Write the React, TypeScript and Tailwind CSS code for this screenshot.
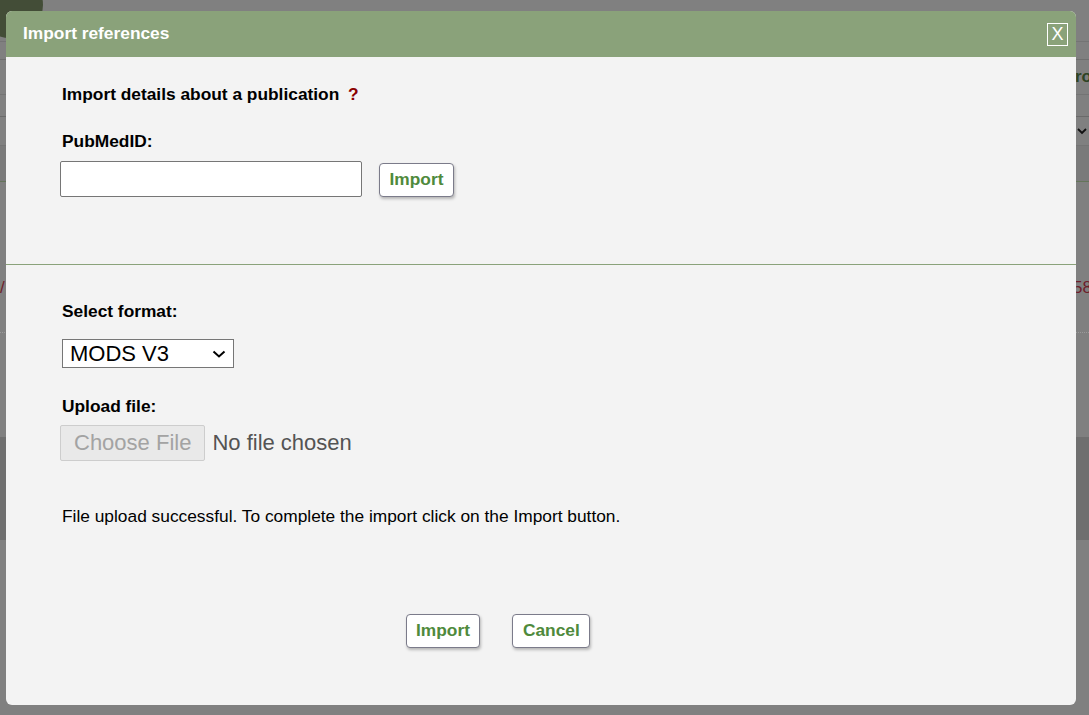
import React from "react";

const font = { fontFamily: '"Liberation Sans", Arial, sans-serif' };

const GreenButton = ({ label }: { label: string }) => (
  <button
    type="button"
    className="h-[34px] px-[9.5px] bg-white border border-[#7b7b8a] rounded-[4px] shadow-[1px_2px_3px_rgba(0,0,0,0.25)] text-[17.33px] font-bold text-[#4f8a3c] leading-none"
  >
    {label}
  </button>
);

const Background = () => (
  <div className="flex flex-col w-full text-[14px]">
    <div className="h-[42px] flex items-start border-b border-[#747474]">
      <div className="w-[66px] h-[66px] rounded-full bg-[#434d37] -ml-[23px] -mt-[28px] shrink-0" />
      <div className="ml-[510px] mt-[7px] text-[#2b3552] whitespace-nowrap">
        Logged in as: David Donald Murphy (staff) · Logout
      </div>
    </div>
    <div className="h-[18px] border-b border-[#6f6f6f]" />
    <div className="h-[35px] flex items-center justify-end border-b border-[#747474]">
      <span className="text-[17px] font-bold text-[#2e4425] -mr-[3px]">Pro</span>
    </div>
    <div className="h-[22px] border-b border-[#6a6a6a]" />
    <div className="h-[29px] flex items-center justify-end pr-[2px] border-b border-[#747474]">
      <svg width="10" height="7" viewBox="0 0 10 7">
        <path d="M1 1 L5 5 L9 1" fill="none" stroke="#111" strokeWidth="1.8" />
      </svg>
    </div>
    <div className="h-[36px] bg-[#7a7a7a] border-b border-[#64755a]" />
    <div className="h-[151px] flex items-center justify-between border-b border-dotted border-[#9a9a9a] pt-[62px]">
      <span className="text-[17px] text-[#6e1d2a]">/</span>
      <span className="text-[17px] text-[#6e1d2a] -mr-[3px]">758</span>
    </div>
    <div className="h-[104px]" />
    <div className="h-[103px] bg-[#6f6f6f]" />
    <div className="h-[200px]" />
  </div>
);

export default function App() {
  return (
    <div className="relative w-[1089px] h-[715px] overflow-hidden bg-[#808080]" style={font}>
      <Background />

      <div className="absolute left-[6px] top-[11px] w-[1070px] h-[694px] rounded-[6px] overflow-hidden bg-[#f3f3f3] flex flex-col">
        <div className="h-[46px] shrink-0 bg-[#8aa27a] flex items-center justify-between pl-[17px] pr-[8px]">
          <span className="text-white font-bold text-[17.33px]">Import references</span>
          <button
            type="button"
            className="w-[21px] h-[23px] border border-white text-white text-[18px] leading-none flex items-center justify-center"
          >
            X
          </button>
        </div>

        <div className="flex flex-col text-[17.33px] leading-[20px] text-black">
          <div className="pl-[56px] mt-[27px] font-bold">
            Import details about a publication <span className="text-[#8b0000] ml-[4px]">?</span>
          </div>
          <div className="pl-[56px] mt-[27px] font-bold">PubMedID:</div>
          <div className="pl-[54px] mt-[10px] flex items-start">
            <input
              type="text"
              className="w-[302px] h-[36px] bg-white border border-[#767676] rounded-[2px] px-[4px] outline-none"
            />
            <div className="ml-[17px] mt-[2px]">
              <GreenButton label="Import" />
            </div>
          </div>

          <div className="mt-[67px] h-px bg-[#8aa27a]" />

          <div className="pl-[56px] mt-[36px] font-bold">Select format:</div>
          <div className="pl-[56px] mt-[18px]">
            <div className="relative w-[172px] h-[29px]">
              <select className="appearance-none w-full h-full bg-white border border-[#767676] rounded-none pl-[7px] text-[22px] leading-none text-black outline-none">
                <option>MODS V3</option>
              </select>
              <svg
                className="absolute right-[8px] top-[11px] pointer-events-none"
                width="14"
                height="8"
                viewBox="0 0 14 8"
              >
                <path d="M1.5 1.5 L7 6.5 L12.5 1.5" fill="none" stroke="#000" strokeWidth="2" />
              </svg>
            </div>
          </div>

          <div className="pl-[56px] mt-[28px] font-bold">Upload file:</div>
          <div className="pl-[54px] mt-[9px] flex items-center">
            <span className="h-[36px] px-[13px] flex items-center bg-[#e9e9e9] border border-[#cdcdcd] rounded-[2px] text-[22px] text-[#a3a3a3]">
              Choose File
            </span>
            <span className="ml-[7px] text-[22px] text-[#545454]">No file chosen</span>
          </div>

          <div className="pl-[56px] mt-[45px]">
            File upload successful. To complete the import click on the Import button.
          </div>

          <div className="pl-[399.5px] mt-[88px] flex gap-[32px]">
            <GreenButton label="Import" />
            <GreenButton label="Cancel" />
          </div>
        </div>
      </div>
    </div>
  );
}
